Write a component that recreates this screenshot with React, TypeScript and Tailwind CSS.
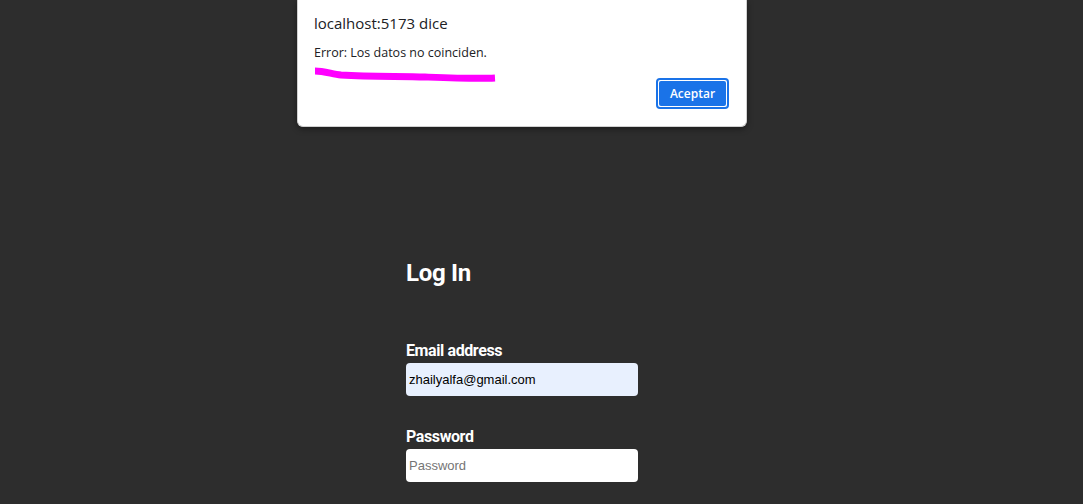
import React from "react";

export default function App() {
  return (
    <div className="relative w-[1083px] h-[504px] overflow-hidden bg-[#2d2d2d]" style={{ fontFamily: "Roboto, 'Liberation Sans', sans-serif" }}>
      <div className="w-[271px] mx-auto pt-[258px] flex flex-col">
        <h1 className="text-[24px] leading-[30px] font-bold text-white tracking-[-0.3px]">Log In</h1>
        <label className="mt-[53px] text-[16px] leading-[19px] font-bold text-white tracking-[-0.4px]">Email address</label>
        <div className="mt-[3px] w-[232px] h-[33px] rounded-[4px] bg-[#e8f0fe] flex items-center pl-[3px] text-[13px] text-black" style={{ fontFamily: "'Liberation Sans', Arial, sans-serif" }}>
          zhailyalfa@gmail.com
        </div>
        <label className="mt-[31px] text-[16px] leading-[19px] font-bold text-white tracking-[-0.4px]">Password</label>
        <div className="mt-[3px] w-[232px] h-[33px] rounded-[4px] bg-white flex items-center pl-[3px] text-[13px] text-[#757575]" style={{ fontFamily: "'Liberation Sans', Arial, sans-serif" }}>
          Password
        </div>
      </div>

      <div className="absolute left-[297px] top-0 w-[450px] h-[127px] bg-white rounded-b-[6px] border border-t-0 border-[#d0d0d0] shadow-[0_2px_6px_rgba(0,0,0,0.4)]" style={{ fontFamily: "'Open Sans', 'Noto Sans', sans-serif" }}>
        <div className="pl-[16px] pt-[12px] text-[15px] leading-[22px] text-[#202124]">localhost:5173 dice</div>
        <div className="pl-[16px] mt-[10px] text-[12.5px] leading-[18px] text-[#202124]">Error: Los datos no coinciden.</div>
        <svg className="absolute left-[14px] top-[64px]" width="186" height="22" viewBox="0 0 186 22">
          <path d="M3 7 C 12 7, 20 10, 29 11 C 60 13, 90 12, 113 13 C 140 14, 165 15, 183 14" stroke="#ff00ff" strokeWidth="7" fill="none" strokeLinecap="butt" />
        </svg>
        <div className="absolute left-[358px] top-[78px] w-[73px] h-[31px] rounded-[4px] border-2 border-[#1a73e8] p-[1px]">
          <div className="w-full h-full rounded-[2px] bg-[#1a73e8] flex items-center justify-center text-white text-[12px] font-semibold">Aceptar</div>
        </div>
      </div>
    </div>
  );
}
